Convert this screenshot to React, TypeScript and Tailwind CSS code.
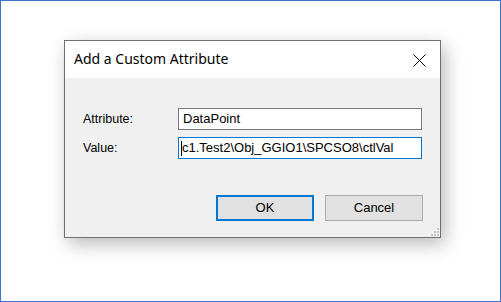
export default function App() {
  return (
    <div className="w-[501px] h-[302px] border border-[#3b73c8] bg-white pl-[63px] pt-[39px] font-['Liberation_Sans',Arial,sans-serif]">
      <div className="w-[377px] h-[198px] border border-[#6f6f6f] bg-[#f0f0f0] flex flex-col shadow-[4px_6px_18px_rgba(0,0,0,0.28)]">
        {/* title bar */}
        <div className="h-[37px] bg-white flex items-center justify-between pl-[9px] pr-[14px] shrink-0">
          <span className="text-[14px] text-black font-['Noto_Sans','Open_Sans',sans-serif] leading-none pb-[2px]">
            Add a Custom Attribute
          </span>
          <svg width="13" height="13" viewBox="0 0 13 13" className="mt-[1px]">
            <path d="M0.5 0.5L12.5 12.5M12.5 0.5L0.5 12.5" stroke="#000" strokeWidth="1" />
          </svg>
        </div>

        {/* body */}
        <div className="relative flex-1 flex flex-col pl-[18px] pr-[17px]">
          <div className="mt-[30px] flex items-center h-[22px]">
            <span className="w-[95px] text-[12.5px] text-black">Attribute:</span>
            <div className="w-[244px] h-[22px] border border-[#7a7a7a] bg-white flex items-center px-[4px] text-[13px] text-black">
              DataPoint
            </div>
          </div>
          <div className="mt-[7px] flex items-center h-[22px]">
            <span className="w-[95px] text-[12.5px] text-black">Value:</span>
            <div className="w-[244px] h-[22px] border border-[#0078d7] bg-white flex items-center overflow-hidden text-[13px] text-black relative">
              <span className="absolute left-[2px] top-[3px] w-px h-[15px] bg-black" />
              <span className="pl-[3px] whitespace-nowrap">c1.Test2\Obj_GGIO1\SPCSO8\ctlVal</span>
            </div>
          </div>

          <div className="mt-[36px] flex justify-end gap-[11px]">
            <button className="w-[98px] h-[26px] border-2 border-[#0078d7] bg-[#e1e1e1] text-[13px] text-black">
              OK
            </button>
            <button className="w-[98px] h-[26px] border border-[#adadad] bg-[#e1e1e1] text-[13px] text-black">
              Cancel
            </button>
          </div>

          {/* resize grip */}
          <svg width="8" height="8" viewBox="0 0 8 8" className="absolute right-[1px] bottom-[1px]">
            <rect x="6" y="0" width="2" height="2" fill="#c8c8c8" />
            <rect x="3" y="3" width="2" height="2" fill="#c8c8c8" />
            <rect x="6" y="3" width="2" height="2" fill="#c8c8c8" />
            <rect x="0" y="6" width="2" height="2" fill="#c8c8c8" />
            <rect x="3" y="6" width="2" height="2" fill="#c8c8c8" />
            <rect x="6" y="6" width="2" height="2" fill="#c8c8c8" />
          </svg>
        </div>
      </div>
    </div>
  );
}
